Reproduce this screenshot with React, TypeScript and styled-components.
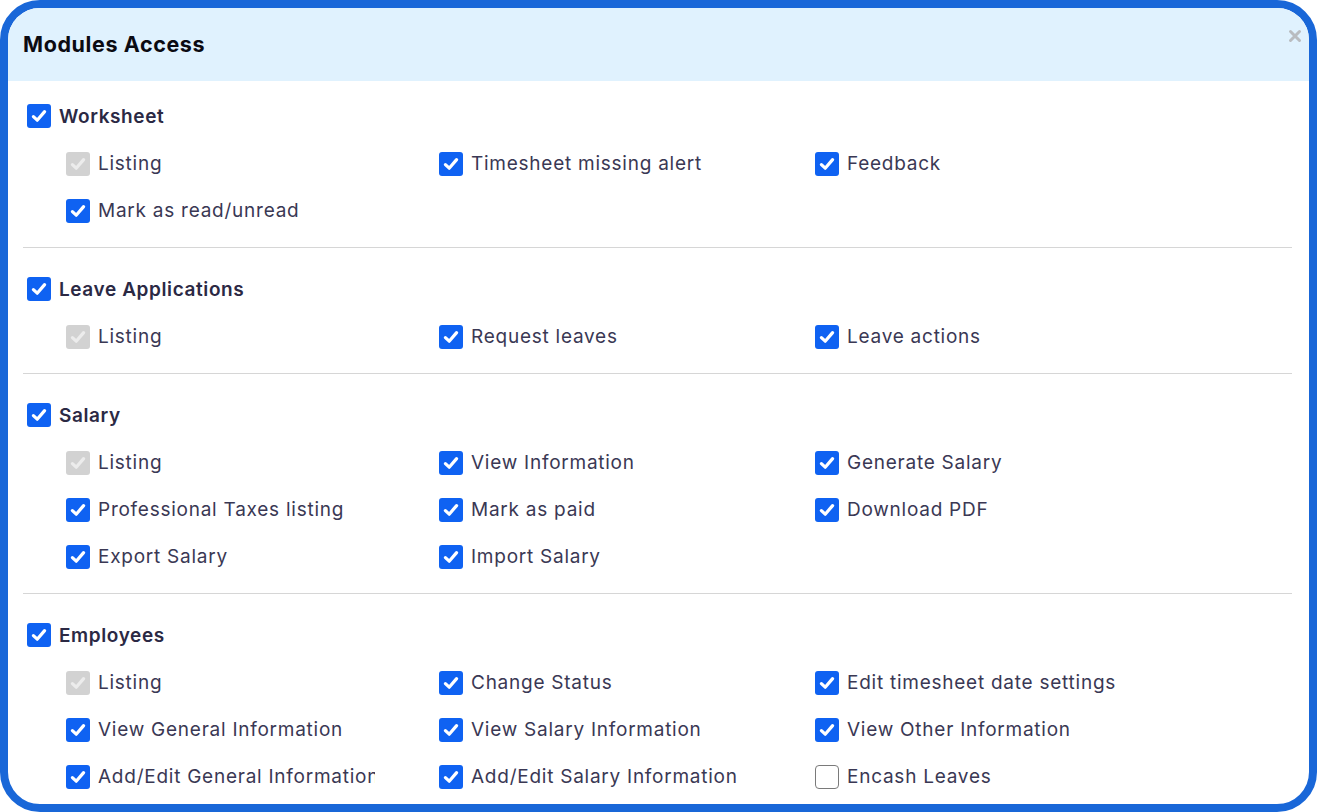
import React from 'react'
import styled, { createGlobalStyle } from 'styled-components'

const GlobalStyle = createGlobalStyle`
  html, body {
    margin: 0;
    padding: 0;
    background: #ffffff;
  }
  body {
    font-family: Inter, "Noto Sans", sans-serif;
  }
`

type Perm = { label: string; state: 'on' | 'off' | 'locked' }
type Module = { title: string; perms: Perm[] }

const modules: Module[] = [
  {
    title: 'Worksheet',
    perms: [
      { label: 'Listing', state: 'locked' },
      { label: 'Timesheet missing alert', state: 'on' },
      { label: 'Feedback', state: 'on' },
      { label: 'Mark as read/unread', state: 'on' },
    ],
  },
  {
    title: 'Leave Applications',
    perms: [
      { label: 'Listing', state: 'locked' },
      { label: 'Request leaves', state: 'on' },
      { label: 'Leave actions', state: 'on' },
    ],
  },
  {
    title: 'Salary',
    perms: [
      { label: 'Listing', state: 'locked' },
      { label: 'View Information', state: 'on' },
      { label: 'Generate Salary', state: 'on' },
      { label: 'Professional Taxes listing', state: 'on' },
      { label: 'Mark as paid', state: 'on' },
      { label: 'Download PDF', state: 'on' },
      { label: 'Export Salary', state: 'on' },
      { label: 'Import Salary', state: 'on' },
    ],
  },
  {
    title: 'Employees',
    perms: [
      { label: 'Listing', state: 'locked' },
      { label: 'Change Status', state: 'on' },
      { label: 'Edit timesheet date settings', state: 'on' },
      { label: 'View General Information', state: 'on' },
      { label: 'View Salary Information', state: 'on' },
      { label: 'View Other Information', state: 'on' },
      { label: 'Add/Edit General Information', state: 'on' },
      { label: 'Add/Edit Salary Information', state: 'on' },
      { label: 'Encash Leaves', state: 'off' },
    ],
  },
]

const Frame = styled.div`
  box-sizing: border-box;
  width: 1317px;
  height: 812px;
  border: 8px solid #1967d8;
  border-radius: 40px;
  overflow: hidden;
  background: #ffffff;
  display: flex;
  flex-direction: column;
`

const Header = styled.div`
  box-sizing: border-box;
  flex: 0 0 73px;
  background: #e0f2fe;
  display: flex;
  align-items: center;
  justify-content: space-between;
  padding: 0 6px 2px 15px;
`

const Title = styled.h2`
  margin: 0;
  font-size: 21.5px;
  font-weight: 700;
  color: #0b0b12;
  letter-spacing: 0.6px;
`

const CloseBtn = styled.button`
  align-self: flex-start;
  margin-top: 20px;
  border: 0;
  background: none;
  padding: 0;
  width: 16px;
  height: 16px;
  display: flex;
  align-items: center;
  justify-content: center;
  cursor: pointer;
`

const Body = styled.div`
  flex: 1;
  overflow: hidden;
  padding: 0 17px 0 15px;
`

const Section = styled.section`
  padding: 17px 0 13px;
  border-bottom: 1px solid #d6d6d6;
  &:first-child {
    padding-top: 11px;
  }
  &:last-child {
    border-bottom: 0;
  }
`

const Row = styled.label<{ $head?: boolean }>`
  display: flex;
  align-items: center;
  gap: 8px;
  height: ${p => (p.$head ? '48px' : '47px')};
  padding-left: ${p => (p.$head ? '4px' : '0')};
  font-size: 19px;
  font-weight: ${p => (p.$head ? 600 : 400)};
  color: ${p => (p.$head ? '#2b2944' : '#3a3854')};
  letter-spacing: ${p => (p.$head ? '0.6px' : '0.75px')};
  white-space: nowrap;
`

const Grid = styled.div`
  display: grid;
  grid-template-columns: 373px 376px 376px;
  padding-left: 43px;
`

const Text = styled.span`
  max-width: 277px;
  overflow: hidden;
`

const Box = styled.span<{ $state: 'on' | 'off' | 'locked' }>`
  box-sizing: border-box;
  flex: 0 0 24px;
  width: 24px;
  height: 24px;
  display: flex;
  align-items: center;
  justify-content: center;
  background: ${p => (p.$state === 'on' ? '#0f62f2' : p.$state === 'locked' ? '#d2d2d2' : '#ffffff')};
  border: ${p => (p.$state === 'off' ? '1.5px solid #7a7a7a' : '0')};
  border-radius: ${p => (p.$state === 'off' ? '4px' : '3px')};
`

function Check({ state }: { state: 'on' | 'off' | 'locked' }) {
  return (
    <Box $state={state}>
      {state !== 'off' && (
        <svg width="18" height="18" viewBox="0 0 18 18">
          <path
            d="M3.4 9.6 L7.2 13.2 L14.6 4.6"
            fill="none"
            stroke={state === 'on' ? '#ffffff' : '#ececec'}
            strokeWidth="3.2"
            strokeLinecap="round"
            strokeLinejoin="round"
          />
        </svg>
      )}
    </Box>
  )
}

export default function App() {
  return (
    <>
      <GlobalStyle />
      <Frame>
        <Header>
          <Title>Modules Access</Title>
          <CloseBtn aria-label="Close">
            <svg width="14" height="14" viewBox="0 0 14 14">
              <path d="M2.5 2.5 L11.5 11.5 M11.5 2.5 L2.5 11.5" stroke="#b9bcc0" strokeWidth="3" strokeLinecap="round" />
            </svg>
          </CloseBtn>
        </Header>
        <Body>
          {modules.map(m => (
            <Section key={m.title}>
              <Row $head>
                <Check state="on" />
                {m.title}
              </Row>
              <Grid>
                {m.perms.map(p => (
                  <Row key={p.label}>
                    <Check state={p.state} />
                    <Text>{p.label}</Text>
                  </Row>
                ))}
              </Grid>
            </Section>
          ))}
        </Body>
      </Frame>
    </>
  )
}
